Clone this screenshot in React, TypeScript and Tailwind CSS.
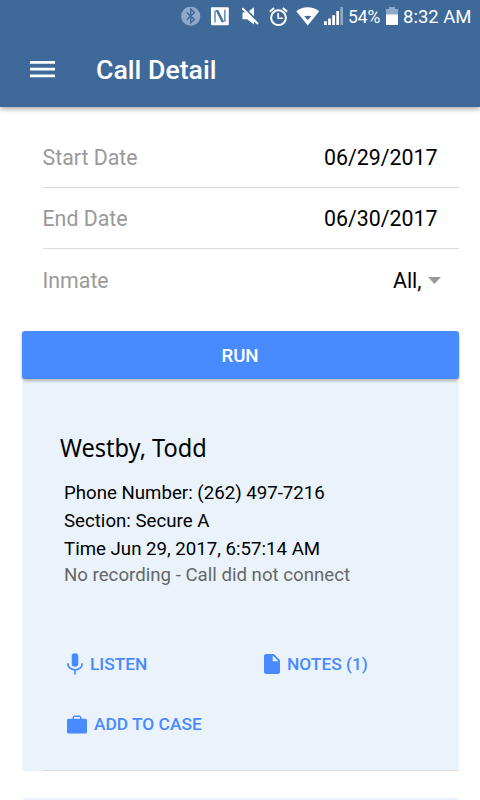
import React from 'react';

function StatusBar() {
  return (
    <div className="flex h-[34px] items-center pl-[181px] text-white">
      {/* bluetooth */}
      <svg className="h-5 w-5 shrink-0" viewBox="0 0 20 20" fill="none">
        <circle cx="9.7" cy="9.2" r="9.6" fill="#8fa9c8" />
        <path d="M5.8 5.4l7.6 7.2-3.7 3.4V2.2l3.7 3.4-7.6 7.2" stroke="#3e6999" strokeWidth="1.4" />
      </svg>
      {/* nfc */}
      <svg className="ml-[10px] h-5 w-[18px] shrink-0" viewBox="0 0 18 20" fill="none">
        <rect x="0" y="0.2" width="17.8" height="18" rx="1" fill="#fff" />
        <path d="M4 15.6V3.6M5.2 3l6.2 12.4M6.6 3l6 12M13.9 2.8v12" stroke="#3e6999" strokeWidth="1.2" />
      </svg>
      {/* muted speaker */}
      <svg className="ml-[13px] h-5 w-[18px] shrink-0" viewBox="0 0 18 20">
        <path d="M0.5 5.5h4.6L12 0.2v17.2l-6.9-5.2H0.5z" fill="#fff" />
        <path d="M1.3 0L18 16.7" stroke="#3e6999" strokeWidth="2" />
        <path d="M0.3 1.2L16 17" stroke="#fff" strokeWidth="2" />
      </svg>
      {/* alarm */}
      <svg className="ml-[9px] h-5 w-5 shrink-0" viewBox="0 0 20 20" fill="none" stroke="#fff">
        <circle cx="9.5" cy="10.7" r="7.4" strokeWidth="2" />
        <path d="M0.8 4.8l4.3-3.7M18.2 4.8l-4.3-3.7" strokeWidth="2" />
        <path d="M9.2 6v5.3h4.6" strokeWidth="1.6" />
      </svg>
      {/* wifi */}
      <svg className="ml-[7px] h-5 w-6 shrink-0" viewBox="0 0 24 20">
        <path d="M0.3 4.3C6.8-1.2 16.7-1.2 23.2 4.3L11.8 18.6z" fill="#fff" />
        <path d="M8.2 9.3q3.6-1 7.2 0l-3.6 3.6z" fill="#3e6999" />
      </svg>
      {/* signal */}
      <svg className="ml-1 h-5 w-5 shrink-0" viewBox="0 0 20 20" fill="#fff">
        <path d="M0 14.2h2.8V18H0zM4.1 11.4h2.8V18H4.1zM8.2 8.2H11V18H8.2zM12.3 4H15v14h-2.7z" />
        <path d="M16.3 0H19v18h-2.7z" fill="#8fa9c8" />
      </svg>
      <span className="ml-[4px] w-[33px] shrink-0 whitespace-nowrap text-[17.5px] leading-5 tracking-[-0.1px]">54%</span>
      <svg className="ml-[5px] h-5 w-3 shrink-0" viewBox="0 0 12 20">
        <path d="M3 0h6v2h3v6H0V2h3z" fill="#8fa9c8" />
        <path d="M0 7.5h12V18H0z" fill="#fff" />
      </svg>
      <span className="ml-[5px] whitespace-nowrap text-[18.5px] leading-5">8:32 AM</span>
    </div>
  );
}

function Row({ label, children }: { label: string; children: React.ReactNode }) {
  return (
    <div className="flex h-[60px] items-center justify-between pt-[2px] text-[21.33px] leading-6">
      <span className="text-[#999]">{label}</span>
      {children}
    </div>
  );
}

export default function App() {
  return (
    <div className="h-[800px] w-[480px] overflow-hidden bg-white font-[Roboto,sans-serif] text-black">
      <header className="relative h-[107px] bg-[#3e6999] shadow-[0_1px_6px_rgba(0,0,0,0.45)]">
        <StatusBar />
        <div className="flex h-[72px] items-center pl-[30px] text-white">
          <svg className="-mt-[2px] h-[18px] w-[25px]" viewBox="0 0 25 18" fill="#fff">
            <path d="M0 1h25v2.7H0zM0 7.8h25v2.7H0zM0 14.5h25v2.7H0z" />
          </svg>
          <h1 className="ml-[41px] text-[26.67px] font-medium leading-8">Call Detail</h1>
        </div>
      </header>

      <main className="px-[21.5px] pt-5">
        <div className="pl-[21px]">
          <div className="border-b border-[#d8d8d8] pr-[21px]">
            <Row label="Start Date"><span>06/29/2017</span></Row>
          </div>
          <div className="border-b border-[#dedede] pr-[21px]">
            <Row label="End Date"><span>06/30/2017</span></Row>
          </div>
          <div className="pr-[18px] pt-px">
            <Row label="Inmate">
              <span className="flex items-center gap-[6px]">
                All,
                <svg className="-mt-px h-[7px] w-[13px]" viewBox="0 0 13 7" fill="#999"><path d="M0 0h13L6.5 7z" /></svg>
              </span>
            </Row>
          </div>
        </div>

        <button className="relative mt-[21px] block h-12 w-full rounded-[3px] bg-[#488aff] pt-px text-[18.67px] font-medium leading-6 text-white shadow-[0_2px_3px_rgba(0,0,0,0.3)]">
          RUN
        </button>

        <section className="mt-[2px] h-[390px] rounded-[3px] bg-[#eaf3fb] pl-[42.5px] pt-[50px]">
          <h2 className="-ml-[4px] origin-left scale-x-[0.943] whitespace-nowrap font-['Noto_Sans',sans-serif] text-[25px] leading-8">Westby, Todd</h2>
          <div className="mt-[16px] text-[18.67px] leading-7">
            <p>Phone Number: (262) 497-7216</p>
            <p>Section: Secure A</p>
            <p>Time Jun 29, 2017, 6:57:14 AM</p>
            <p className="-mt-[2px] text-[#666]">No recording - Call did not connect</p>
          </div>
          <div className="mt-[63px] grid grid-cols-[197px_1fr] gap-y-9 text-[17.33px] font-medium leading-6 text-[#488aff]">
            <span className="flex items-center pl-[3px]">
              <svg className="mr-[7px] h-[22px] w-4" viewBox="0 0 16 22" fill="none" stroke="#488aff">
                <rect x="4.7" y="0.2" width="6.6" height="13.6" rx="3.3" fill="#488aff" stroke="none" />
                <path d="M0.8 10.2c0 8.8 14.4 8.8 14.4 0M8 16.6V21.5" strokeWidth="1.7" />
              </svg>
              LISTEN
            </span>
            <span className="flex items-center pl-[3px]">
              <svg className="mr-[7px] h-5 w-4" viewBox="0 0 16 20" fill="#488aff">
                <path d="M2 0h7.8L16 6.2V18a2 2 0 0 1-2 2H2a2 2 0 0 1-2-2V2a2 2 0 0 1 2-2zM8.7 1.5v5.8h5.8z" fillRule="evenodd" />
              </svg>
              NOTES (1)
            </span>
            <span className="flex items-center pl-[3px]">
              <svg className="mr-[7px] h-[19px] w-5" viewBox="0 0 20 19" fill="#488aff">
                <path d="M5.5 3.8V2L7 0.5h6L14.5 2v1.8H18.5a1.5 1.5 0 0 1 1.5 1.5V17a1.5 1.5 0 0 1-1.5 1.5H1.5A1.5 1.5 0 0 1 0 17V5.3a1.5 1.5 0 0 1 1.5-1.5zM7 3.8h6V2H7z" fillRule="evenodd" />
              </svg>
              ADD TO CASE
            </span>
          </div>
        </section>
        <div className="-mt-px ml-[21px] h-px bg-[#dedede]" />
        <section className="mt-[27px] h-10 rounded-[3px] bg-[#eaf3fb]" />
      </main>
    </div>
  );
}
